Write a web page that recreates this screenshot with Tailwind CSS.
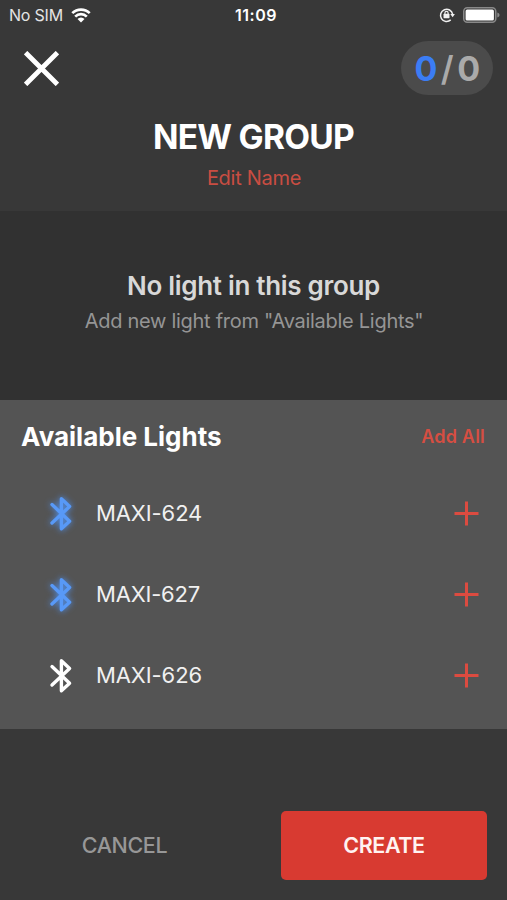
<!DOCTYPE html>
<html lang="en">
<head>
  <meta charset="UTF-8" />
  <title>New Group</title>
  <meta name="viewport" content="width=device-width, initial-scale=1" />
  <script src="https://cdn.jsdelivr.net/npm/@tailwindcss/browser@4"></script>
</head>
<body class="bg-[#383838]">
  <div class="flex flex-col h-[900px] w-[507px] overflow-hidden bg-[#383838] text-white whitespace-nowrap font-[Inter,sans-serif]">

    <header class="h-[211px] shrink-0">
      <!-- status bar -->
      <div class="grid grid-cols-3 items-center h-[30px] pl-[9px] pr-[7px]">
        <div class="flex items-center gap-2 text-[#e4e4e4]">
          <span class="text-[16px] leading-[30px] tracking-[-0.2px]">No SIM</span>
          <svg class="w-[20px] h-[15px]" viewBox="0 0 20 15" fill="none" stroke="#fff" stroke-width="2.7">
            <path d="M1.3 5.1a12.5 12.5 0 0 1 17.4 0" />
            <path d="M4.2 8.6a8.2 8.2 0 0 1 11.6 0" />
            <path d="M6.5 11a4.8 4.8 0 0 1 7 0L10 14.4z" fill="#fff" stroke="none" />
          </svg>
        </div>
        <div class="text-center text-[16px] leading-[30px] font-semibold tracking-[0.5px] pl-[3px]">11:09</div>
        <div class="flex items-center justify-end gap-[8px]">
          <svg class="w-[16px] h-[16px]" viewBox="0 0 16 16" fill="none" stroke="#f0f0f0" stroke-width="1.5">
            <path d="M11.7 12.9A6.1 6.1 0 1 1 13.6 7.2" />
            <path d="M11.3 7h4.6l-2.3 3.2z" fill="#f0f0f0" stroke="none" />
            <rect x="4.5" y="6.8" width="6" height="4.4" rx=".6" fill="#f0f0f0" stroke="none" />
            <path d="M5.9 7V5.9a1.6 1.6 0 0 1 3.2 0V7" stroke-width="1.2" />
          </svg>
          <svg class="w-[37px] h-[16px]" viewBox="0 0 37 16">
            <rect x=".75" y=".75" width="32" height="14.5" rx="3.5" fill="none" stroke="#898989" stroke-width="1.5" />
            <rect x="2.6" y="2.6" width="28.3" height="10.8" rx="1.5" fill="#fff" />
            <path d="M34.3 5.5c1.5.4 2.2 1.4 2.2 2.5s-.7 2.1-2.2 2.5z" fill="#898989" />
          </svg>
        </div>
      </div>

      <div class="flex justify-between pl-6 pr-[14px] pt-[11px]">
        <button class="mt-[10px] w-[35px] h-[35px]">
          <svg class="w-[35px] h-[35px]" viewBox="0 0 35 35" stroke="#fff" stroke-width="4.8">
            <path d="M1.6 1.6l31.8 31.8M33.4 1.6L1.6 33.4" />
          </svg>
        </button>
        <div class="flex items-center justify-center gap-[4px] w-[92px] h-[54px] rounded-full bg-[#4b4b4b] text-[34px] font-bold tracking-[-0.6px] text-[#aaaaaa]">
          <span class="text-[#3b7df5]">0</span>
          <span class="font-semibold">/</span>
          <span>0</span>
        </div>
      </div>

      <h1 class="mt-[22px] text-center text-[33.5px] leading-[40px] font-bold tracking-[-0.75px]">NEW GROUP</h1>
      <p class="mt-[9px] pl-px text-center text-[20px] leading-[24px] tracking-[-0.28px] text-[#c94d42]">Edit Name</p>
    </header>

    <section class="h-[189px] shrink-0 bg-[#313131] pt-[59px] text-center">
      <h2 class="text-[26px] leading-[32px] font-semibold tracking-[-0.3px] text-[#d8d8d8]">No light in this group</h2>
      <p class="mt-[7px] pl-px text-[20px] leading-[24px] tracking-[-0.28px] text-[#959595]">Add new light from "Available Lights"</p>
    </section>

    <main class="h-[329px] shrink-0 bg-[#545454]">
      <div class="flex items-center justify-between h-[73px] pl-[21px] pr-[22px]">
        <h2 class="text-[26px] font-bold">Available Lights</h2>
        <button class="text-[18px] font-semibold tracking-[0.2px] text-[#d64e42]">Add All</button>
      </div>
      <ul>
        <li class="flex items-center h-[81px] pl-[47px] pr-[28px]">
          <svg class="w-[28px] h-[40px] overflow-visible drop-shadow-[0_0_3px_#4f93f5]" viewBox="0 0 28 40" fill="none" stroke="#5899f7" stroke-width="3.4" stroke-linejoin="round" stroke-linecap="round">
            <path d="M5 10.6L22.6 27.2L14.4 34.8V4.8L22.6 12.4L5 29" />
          </svg>
          <span class="ml-[21px] flex-1 text-[22px] tracking-[-0.1px] text-[#f0f0f0]">MAXI-624</span>
          <svg class="w-[25px] h-[25px]" viewBox="0 0 25 25" stroke="#dc4b40" stroke-width="3"><path d="M.5 12.5h24M12.5 .5v24" /></svg>
        </li>
        <li class="flex items-center h-[81px] pl-[47px] pr-[28px]">
          <svg class="w-[28px] h-[40px] overflow-visible drop-shadow-[0_0_3px_#4f93f5]" viewBox="0 0 28 40" fill="none" stroke="#5899f7" stroke-width="3.4" stroke-linejoin="round" stroke-linecap="round">
            <path d="M5 10.6L22.6 27.2L14.4 34.8V4.8L22.6 12.4L5 29" />
          </svg>
          <span class="ml-[21px] flex-1 text-[22px] tracking-[-0.2px] text-[#f0f0f0]">MAXI-627</span>
          <svg class="w-[25px] h-[25px]" viewBox="0 0 25 25" stroke="#dc4b40" stroke-width="3"><path d="M.5 12.5h24M12.5 .5v24" /></svg>
        </li>
        <li class="flex items-center h-[81px] pl-[47px] pr-[28px]">
          <svg class="w-[28px] h-[40px]" viewBox="0 0 28 40" fill="none" stroke="#fff" stroke-width="3.4" stroke-linejoin="round" stroke-linecap="round">
            <path d="M5 10.6L22.6 27.2L14.4 34.8V4.8L22.6 12.4L5 29" />
          </svg>
          <span class="ml-[21px] flex-1 text-[22px] tracking-[-0.1px] text-[#f0f0f0]">MAXI-626</span>
          <svg class="w-[25px] h-[25px]" viewBox="0 0 25 25" stroke="#dc4b40" stroke-width="3"><path d="M.5 12.5h24M12.5 .5v24" /></svg>
        </li>
      </ul>
    </main>

    <footer class="flex-1 flex items-start pt-[82px] pl-[20px] pr-[20px] text-[21.5px] tracking-[-0.4px]">
      <button class="w-[209px] h-[69px] mr-[52px] font-medium text-[#979797]">CANCEL</button>
      <button class="w-[206px] h-[69px] rounded-[5px] bg-[#d83a31] font-semibold text-[#fff3f2]">CREATE</button>
    </footer>
  </div>
</body>
</html>
